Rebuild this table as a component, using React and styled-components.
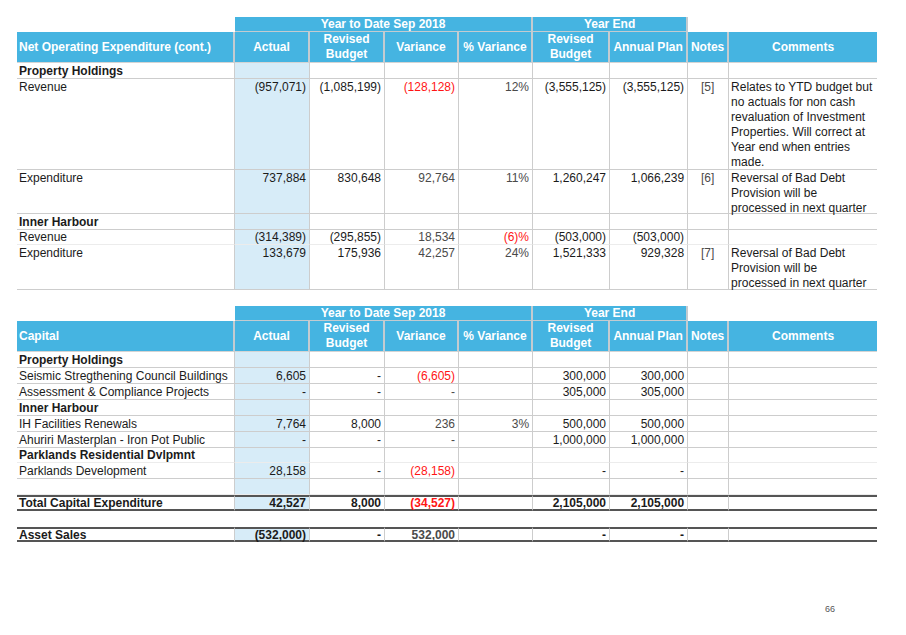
import React from 'react'
import styled, { createGlobalStyle, css } from 'styled-components'

const BLUE = '#45b4e1'
const PALE = '#d7ecf8'
const RED = '#ff1515'
const GRID = '#cdcdcd'

const GlobalStyle = createGlobalStyle`
  html, body {
    margin: 0;
    padding: 0;
    background: #fff;
  }
  body {
    font-family: "Liberation Sans", Arial, sans-serif;
    color: #1b1b1b;
  }
`

const Page = styled.div`
  width: 906px;
  height: 635px;
  box-sizing: border-box;
  padding: 17px 0 0 17px;
  display: flex;
  flex-direction: column;
  gap: 16px;
`

const Table = styled.table`
  border-collapse: separate;
  border-spacing: 0;
  table-layout: fixed;
  width: 860px;
  font-size: 12px;
`

const Col = styled.col`
  width: ${p => p.$w}px;
`

const BandRow = styled.tr`
  height: 15px;
`

const BandCell = styled.th`
  padding: 0;
  font-weight: bold;
  line-height: 14px;
  text-align: center;
  color: #fff;
  ${p => p.$filled && css`
    background: ${BLUE};
    border-bottom: 1px solid #c3cbd0;
    border-right: 2px solid #c3cbd0;
  `}
`

const HeadRow = styled.tr`
  height: 31px;
`

const HeadCell = styled.th`
  padding: 0 2px;
  background: ${BLUE};
  color: #fff;
  font-weight: bold;
  line-height: 15px;
  text-align: ${p => p.$align || 'center'};
  white-space: nowrap;
  border-bottom: 1px solid #d4d4d4;
  border-right: ${p => (p.$last ? 'none' : '2px solid #c3cbd0')};
`

const lineFor = kind => {
  if (kind === 'faint') return '1px solid #ececec'
  return `1px solid ${GRID}`
}

const Row = styled.tr`
  height: ${p => p.$h}px;
  & > td {
    line-height: ${p => (p.$h <= 16 ? p.$h - 2 : 15)}px;
    border-bottom: ${p => lineFor(p.$line)};
  }
  ${p => p.$total && css`
    & > td {
      font-weight: bold;
      line-height: ${p.$h - 5}px;
      border-top: 2px solid #555;
      border-bottom: 2px solid #555;
    }
  `}
`

const Cell = styled.td`
  padding: 1px 3px 0 2px;
  vertical-align: top;
  white-space: nowrap;
  text-align: ${p => p.$align || 'right'};
  font-weight: ${p => (p.$bold ? 'bold' : 'normal')};
  color: ${p => (p.$tone === 'red' ? RED : p.$tone === 'muted' ? '#4a4a4a' : '#1b1b1b')};
  background: ${p => (p.$blue ? PALE : 'transparent')};
  border-right: ${p => (p.$last ? 'none' : `1px solid ${GRID}`)};
`

const Lines = styled.div`
  height: ${p => p.$h}px;
  line-height: 15px;
  overflow: visible;
`

const GapCell = styled.td`
  height: 16px;
  padding: 0;
`

const Footer = styled.div`
  margin-top: auto;
  margin-bottom: 21px;
  width: 818px;
  text-align: right;
  font-size: 9px;
  color: #555;
`

const widths = [218, 75, 75, 74, 74, 77, 78, 41, 148]

const toneOf = (i, v) => {
  if (i !== 3 && i !== 4 && i !== 7) return undefined
  if (typeof v === 'string' && v.startsWith('(')) return 'red'
  return 'muted'
}

const alignOf = i => (i === 0 || i === 8 ? 'left' : i === 7 ? 'center' : 'right')

const DataRow = ({ cells = [], section, h = 16, line, total }) => {
  const values = section ? [section] : cells
  return (
    <Row $h={h} $line={line} $total={total}>
      {widths.map((_, i) => {
        const v = values[i]
        return (
          <Cell
            key={i}
            $align={alignOf(i)}
            $tone={toneOf(i, v)}
            $bold={!!section}
            $blue={i === 1}
            $last={i === 8}
          >
            {Array.isArray(v)
              ? <Lines $h={h - 2}>{v.map((t, k) => <div key={k}>{t}</div>)}</Lines>
              : v}
          </Cell>
        )
      })}
    </Row>
  )
}

const Heading = ({ title }) => (
  <>
    <colgroup>
      {widths.map((w, i) => <Col key={i} $w={w} />)}
    </colgroup>
    <thead>
      <BandRow>
        <BandCell />
        <BandCell colSpan={4} $filled>Year to Date Sep 2018</BandCell>
        <BandCell colSpan={2} $filled>Year End</BandCell>
        <BandCell colSpan={2} />
      </BandRow>
      <HeadRow>
        <HeadCell $align="left">{title}</HeadCell>
        <HeadCell>Actual</HeadCell>
        <HeadCell>Revised<br />Budget</HeadCell>
        <HeadCell>Variance</HeadCell>
        <HeadCell>% Variance</HeadCell>
        <HeadCell>Revised<br />Budget</HeadCell>
        <HeadCell>Annual Plan</HeadCell>
        <HeadCell>Notes</HeadCell>
        <HeadCell $last>Comments</HeadCell>
      </HeadRow>
    </thead>
  </>
)

const badDebt = ['Reversal of Bad Debt', 'Provision will be', 'processed in next quarter']

export default function App () {
  return (
    <Page>
      <GlobalStyle />
      <Table>
        <Heading title="Net Operating Expenditure (cont.)" />
        <tbody>
          <DataRow section="Property Holdings" />
          <DataRow
            h={91}
            cells={['Revenue', '(957,071)', '(1,085,199)', '(128,128)', '12%', '(3,555,125)', '(3,555,125)', '[5]',
              ['Relates to YTD budget but', 'no actuals for non cash', 'revaluation of Investment',
                'Properties. Will correct at', 'Year end when entries', 'made.']]}
          />
          <DataRow h={44} cells={['Expenditure', '737,884', '830,648', '92,764', '11%', '1,260,247', '1,066,239', '[6]', badDebt]} />
          <DataRow section="Inner Harbour" />
          <DataRow h={15} line="faint" cells={['Revenue', '(314,389)', '(295,855)', '18,534', '(6)%', '(503,000)', '(503,000)', '', '']} />
          <DataRow h={45} cells={['Expenditure', '133,679', '175,936', '42,257', '24%', '1,521,333', '929,328', '[7]', badDebt]} />
        </tbody>
      </Table>

      <Table>
        <Heading title="Capital" />
        <tbody>
          <DataRow section="Property Holdings" />
          <DataRow cells={['Seismic Stregthening Council Buildings', '6,605', '-', '(6,605)', '', '300,000', '300,000']} />
          <DataRow cells={['Assessment & Compliance Projects', '-', '-', '-', '', '305,000', '305,000']} />
          <DataRow section="Inner Harbour" />
          <DataRow cells={['IH Facilities Renewals', '7,764', '8,000', '236', '3%', '500,000', '500,000']} />
          <DataRow cells={['Ahuriri Masterplan - Iron Pot Public', '-', '-', '-', '', '1,000,000', '1,000,000']} />
          <DataRow h={15} section="Parklands Residential Dvlpmnt" line="faint" />
          <DataRow cells={['Parklands Development', '28,158', '-', '(28,158)', '', '-', '-']} />
          <DataRow line="faint" cells={[]} />
          <DataRow total cells={['Total Capital Expenditure', '42,527', '8,000', '(34,527)', '', '2,105,000', '2,105,000']} />
          <tr><GapCell colSpan={9} /></tr>
          <DataRow total h={15} cells={['Asset Sales', '(532,000)', '-', '532,000', '', '-', '-']} />
        </tbody>
      </Table>

      <Footer>66</Footer>
    </Page>
  )
}
